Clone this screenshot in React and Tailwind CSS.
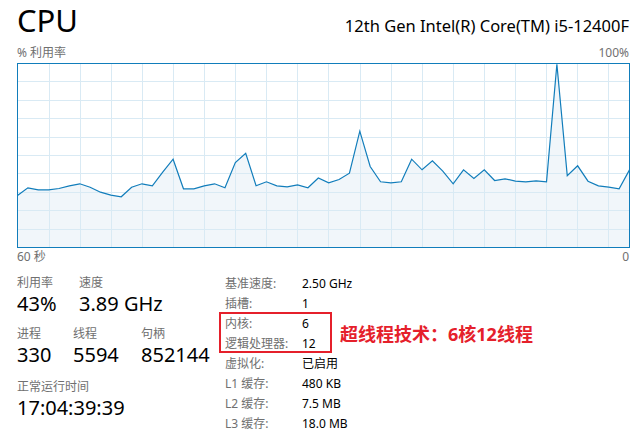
import React from "react";

const FONT = { fontFamily: '"Noto Sans", "Noto Sans CJK SC", sans-serif' };

const ys = [132,124.3,126.3,126.3,125,122.3,120.3,123.7,128.7,131.7,133.3,123.7,120.3,122.3,108.7,95.7,125.3,125.3,122.3,120.3,124.3,99,89.7,122.3,118.3,122.3,123.3,121.3,124.3,114.5,119.3,116,109.7,67.7,103,118.3,119.3,118.3,95.7,106.3,97.3,107.7,120.3,106.3,115,106.3,117,115.3,117.7,118.3,117.3,118.3,0.8,112.3,102.3,117.7,122.3,123.7,125.3,106.3];

function Graph() {
  const W = 613;
  const H = 185;
  const step = 612 / 59;
  const pts = ys.map((y, i) => [0.5 + i * step, y + 0.5]);
  const line = pts.map((p) => p.join(",")).join(" ");
  const area = `0.5,${H - 0.5} ${line} ${W - 0.5},${H - 0.5}`;
  const vlines = [];
  for (let k = 0; k < 19; k++) vlines.push(31.5 + k * 31.1);
  const hlines = [];
  for (let k = 1; k < 10; k++) hlines.push(k * 18.4);
  return (
    <svg width={W} height={H} className="block">
      <rect x="0" y="0" width={W} height={H} fill="#ffffff" />
      <polygon points={area} fill="#f1f6fa" />
      {vlines.map((x, i) => (
        <line key={"v" + i} x1={Math.round(x) + 0.5} y1="0" x2={Math.round(x) + 0.5} y2={H} stroke="#d9eaf4" strokeWidth="1" />
      ))}
      {hlines.map((y, i) => (
        <line key={"h" + i} x1="0" y1={Math.round(y) + 0.5} x2={W} y2={Math.round(y) + 0.5} stroke="#d9eaf4" strokeWidth="1" />
      ))}
      <polyline points={line} fill="none" stroke="#117dbb" strokeWidth="1.2" strokeLinejoin="miter" />
      <rect x="0.5" y="0.5" width={W - 1} height={H - 1} fill="none" stroke="#117dbb" strokeWidth="1" />
    </svg>
  );
}

function Stat({ label, value, w }) {
  return (
    <div className={w}>
      <div className="text-[12px] leading-[16px] text-[#707070]">{label}</div>
      <div className="text-[20px] leading-[26px] text-black">{value}</div>
    </div>
  );
}

function Row({ label, value }) {
  return (
    <div className="flex h-[20px] items-center text-[12px] leading-[20px]">
      <div className="w-[77px] text-[#707070]">{label}</div>
      <div className="text-black">{value}</div>
    </div>
  );
}

export default function App() {
  return (
    <div className="relative h-[444px] w-[641px] overflow-hidden bg-white pl-[17px] pr-[11px]" style={FONT}>
      <div className="flex h-[42px] items-baseline justify-between pr-[1px]">
        <div className="text-[31px] leading-[40px] text-black">CPU</div>
        <div className="text-[16.5px] leading-[24px] text-black">12th Gen Intel(R) Core(TM) i5-12400F</div>
      </div>
      <div className="flex h-[21px] items-center justify-between pr-[1px] text-[12px] leading-[16px] text-[#707070]">
        <span>% 利用率</span>
        <span>100%</span>
      </div>
      <Graph />
      <div className="flex h-[16px] items-center justify-between pr-[1px] pt-[2px] text-[12px] leading-[16px] text-[#707070]">
        <span>60 秒</span>
        <span>0</span>
      </div>
      <div className="mt-[10px] flex">
        <div className="w-[208px]">
          <div className="flex pt-[1px]">
            <Stat w="w-[62px]" label="利用率" value="43%" />
            <Stat w="" label="速度" value="3.89 GHz" />
          </div>
          <div className="mt-[9px] flex">
            <Stat w="w-[56px]" label="进程" value="330" />
            <Stat w="w-[68px]" label="线程" value="5594" />
            <Stat w="" label="句柄" value="852144" />
          </div>
          <div className="mt-[11px]">
            <Stat w="" label="正常运行时间" value="17:04:39:39" />
          </div>
        </div>
        <div className="flex flex-col">
          <Row label="基准速度:" value="2.50 GHz" />
          <Row label="插槽:" value="1" />
          <div className="relative">
            <Row label="内核:" value="6" />
            <Row label="逻辑处理器:" value="12" />
            <div className="absolute left-[-6px] top-[-2px] h-[41px] w-[113px] border-2 border-[#e5202b]" />
            <div className="absolute left-[115px] top-[9px] whitespace-nowrap text-[18px] font-bold leading-[22px] text-[#e5202b]">
              超线程技术：6核12线程
            </div>
          </div>
          <Row label="虚拟化:" value="已启用" />
          <Row label="L1 缓存:" value="480 KB" />
          <Row label="L2 缓存:" value="7.5 MB" />
          <Row label="L3 缓存:" value="18.0 MB" />
        </div>
      </div>
    </div>
  );
}
